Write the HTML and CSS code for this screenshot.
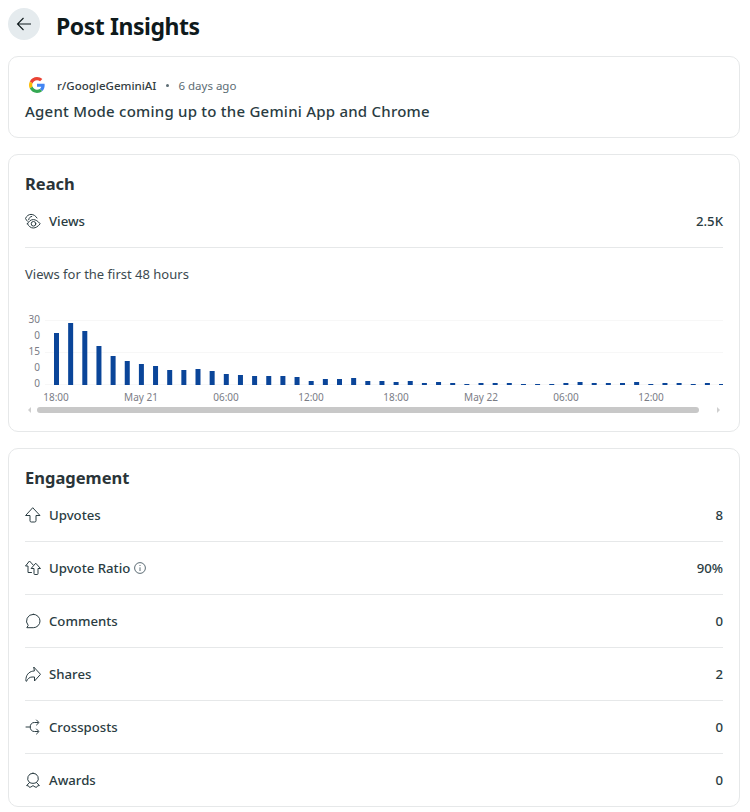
FILE: index.html
```html
<!DOCTYPE html>
<html lang="en">
<head>
<meta charset="utf-8">
<title>Post Insights</title>
<link rel="stylesheet" href="styles.css">
</head>
<body>
<header class="top">
  <button class="back" aria-label="Back">
    <svg class="back-icon" viewBox="0 0 16 16"><path d="M15 8H1.500M7.500 2 1.500 8l6 6"/></svg>
  </button>
  <h1 class="page-title">Post Insights</h1>
</header>

<section class="card post">
  <div class="meta">
    <span class="avatar">
      <svg viewBox="0 0 48 48" class="g-logo">
        <path fill="#EA4335" d="M24 9.5c3.54 0 6.71 1.22 9.21 3.6l6.85-6.85C35.9 2.38 30.47 0 24 0 14.62 0 6.51 5.38 2.56 13.22l7.98 6.19C12.43 13.72 17.74 9.5 24 9.5z"/>
        <path fill="#4285F4" d="M46.98 24.55c0-1.57-.15-3.09-.38-4.55H24v9.02h12.94c-.58 2.96-2.26 5.48-4.78 7.18l7.73 6c4.51-4.18 7.09-10.36 7.09-17.65z"/>
        <path fill="#FBBC05" d="M10.53 28.59c-.48-1.45-.76-2.99-.76-4.59s.27-3.14.76-4.59l-7.98-6.19C.92 16.46 0 20.12 0 24c0 3.88.92 7.54 2.56 10.78l7.97-6.19z"/>
        <path fill="#34A853" d="M24 48c6.48 0 11.93-2.13 15.89-5.81l-7.73-6c-2.15 1.45-4.92 2.3-8.16 2.3-6.26 0-11.57-4.22-13.47-9.91l-7.98 6.19C6.51 42.62 14.62 48 24 48z"/>
      </svg>
    </span>
    <span class="sub">r/GoogleGeminiAI</span>
    <span class="dot"></span>
    <span class="age">6 days ago</span>
  </div>
  <p class="post-title">Agent Mode coming up to the Gemini App and Chrome</p>
</section>

<section class="card">
  <h2 class="card-title">Reach</h2>
  <div class="row">
    <svg class="icon" viewBox="0 0 16 16">
      <path d="M12 5C10.600 2.800 8.500 1.400 6 1.400 3.600 1.400 1.700 2.900.5 5.400c.5 1.200 1.200 2.200 2.200 3"/>
      <path d="M3.700 6.700C4 4.800 5.100 3.700 6.800 3.400"/>
      <path d="M2.500 10.800c1.300-2.700 3.400-4.200 5.800-4.200s4.600 1.500 6.900 4.200c-2.300 2.700-4.500 4.200-6.900 4.200S3.800 13.500 2.500 10.800z"/>
      <circle cx="8.500" cy="10.800" r="2.300"/>
    </svg>
    <span class="label">Views</span>
    <span class="value">2.5K</span>
  </div>
  <p class="chart-note">Views for the first 48 hours</p>
  <svg class="chart" viewBox="0 0 698 120" role="img" aria-label="Views per hour">
    <g class="grid">
      <rect x="20" y="20" width="678" height="1"/>
      <rect x="20" y="52" width="678" height="1"/>
      <rect x="20" y="84" width="678" height="1"/>
    </g>
    <g class="y-axis">
      <text x="15" y="22.500">30</text>
      <text x="15" y="38.500">0</text>
      <text x="15" y="54.500">15</text>
      <text x="15" y="70.500">0</text>
      <text x="15" y="86.500">0</text>
    </g>
    <g class="bars">
      <rect x="29" y="33" width="5" height="52"/><rect x="43.150" y="23" width="5" height="62"/><rect x="57.300" y="31" width="5" height="54"/><rect x="71.450" y="46" width="5" height="39"/>
      <rect x="85.600" y="56" width="5" height="29"/><rect x="99.750" y="61" width="5" height="24"/><rect x="113.900" y="64" width="5" height="21"/><rect x="128.050" y="66" width="5" height="19"/>
      <rect x="142.200" y="70" width="5" height="15"/><rect x="156.350" y="70" width="5" height="15"/><rect x="170.500" y="69" width="5" height="16"/><rect x="184.650" y="71" width="5" height="14"/>
      <rect x="198.800" y="74" width="5" height="11"/><rect x="212.950" y="75" width="5" height="10"/><rect x="227.100" y="76" width="5" height="9"/><rect x="241.250" y="76" width="5" height="9"/>
      <rect x="255.400" y="76" width="5" height="9"/><rect x="269.550" y="77" width="5" height="8"/><rect x="283.700" y="81" width="5" height="4"/><rect x="297.850" y="79" width="5" height="6"/>
      <rect x="312" y="79" width="5" height="6"/><rect x="326.150" y="78" width="5" height="7"/><rect x="340.300" y="81" width="5" height="4"/><rect x="354.450" y="81" width="5" height="4"/>
      <rect x="368.600" y="82" width="5" height="3"/><rect x="382.750" y="81" width="5" height="4"/><rect x="396.900" y="83" width="5" height="2"/><rect x="411.050" y="82" width="5" height="3"/>
      <rect x="425.200" y="83" width="5" height="2"/><rect x="439.350" y="84" width="5" height="1"/><rect x="453.500" y="83" width="5" height="2"/><rect x="467.650" y="83" width="5" height="2"/>
      <rect x="481.800" y="83" width="5" height="2"/><rect x="495.950" y="84" width="5" height="1"/><rect x="510.100" y="84" width="5" height="1"/><rect x="524.250" y="84" width="5" height="1"/>
      <rect x="538.400" y="83" width="5" height="2"/><rect x="552.550" y="82" width="5" height="3"/><rect x="566.700" y="83" width="5" height="2"/><rect x="580.850" y="83" width="5" height="2"/>
      <rect x="595" y="83" width="5" height="2"/><rect x="609.150" y="82" width="5" height="3"/><rect x="623.300" y="84" width="5" height="1"/><rect x="637.450" y="83" width="5" height="2"/>
      <rect x="651.600" y="83" width="5" height="2"/><rect x="665.750" y="84" width="5" height="1"/><rect x="679.900" y="83" width="5" height="2"/><rect x="694.050" y="84" width="4" height="1"/>
    </g>
    <g class="x-axis">
      <text x="31" y="101">18:00</text>
      <text x="116" y="101">May 21</text>
      <text x="201" y="101">06:00</text>
      <text x="286" y="101">12:00</text>
      <text x="371" y="101">18:00</text>
      <text x="456" y="101">May 22</text>
      <text x="541" y="101">06:00</text>
      <text x="626" y="101">12:00</text>
    </g>
    <rect class="thumb" x="12" y="107" width="662" height="6" rx="3"/>
    <path class="arrow" d="M3 110l3-3v6z"/>
    <path class="arrow" d="M692 107l3 3-3 3z"/>
  </svg>
</section>

<section class="card">
  <h2 class="card-title">Engagement</h2>
  <div class="row">
    <svg class="icon" viewBox="0 0 16 16"><path d="M8 1l7 7.500h-4v5.200a1.300 1.300 0 0 1-1.300 1.300H6.300A1.300 1.300 0 0 1 5 13.700V8.500H1z"/></svg>
    <span class="label">Upvotes</span>
    <span class="value">8</span>
  </div>
  <div class="row">
    <svg class="icon" viewBox="0 0 16 16"><path d="M7.900 4.700 4.500 1 .5 6H3v6.500h3.500"/><path d="M11 3.500l4.500 5H13v5.200a.8.800 0 0 1-.8.800H9.800a.8.800 0 0 1-.8-.8V8.500H6.500z"/></svg>
    <span class="label">Upvote Ratio</span>
    <svg class="info" viewBox="0 0 12 12"><circle cx="6" cy="6" r="5.400"/><path d="M6 5.300V9"/><path d="M6 3v1"/></svg>
    <span class="value">90%</span>
  </div>
  <div class="row">
    <svg class="icon" viewBox="0 0 16 16"><path d="M8.300 1.300a6.700 6.700 0 1 1 0 13.400H1.800l1.400-2.300A6.700 6.700 0 0 1 8.300 1.300z"/></svg>
    <span class="label">Comments</span>
    <span class="value">0</span>
  </div>
  <div class="row">
    <svg class="icon" viewBox="0 0 16 16"><path d="M9 1.300l6.500 7-6 6.700v-4H7c-2.500 0-4.500 2-5.500 4.300-.9.200-.7-1.300-.5-2.800C1.500 8 5 5 9 5z"/></svg>
    <span class="label">Shares</span>
    <span class="value">2</span>
  </div>
  <div class="row">
    <svg class="icon" viewBox="0 0 16 16"><path d="M1 8h4M13 3.500H9.500A4 4 0 0 0 5.300 8a4 4 0 0 0 4.200 4.500H13M11.500 1l2.500 2.500L11.500 6M11.500 10l2.500 2.500-2.500 2.500"/></svg>
    <span class="label">Crossposts</span>
    <span class="value">0</span>
  </div>
  <div class="row">
    <svg class="icon" viewBox="0 0 16 16"><path d="M8 1.200a5.300 5.300 0 0 1 3.500 9.300l2.900 3.100-1.800.2-1 1.500-1.500-.3L8 13.600 5.900 15l-1.500.3-1-1.500-1.800-.2 2.900-3.100A5.300 5.300 0 0 1 8 1.200z"/><path d="M4.500 10.500c2.100 1.200 4.900 1.200 7 0"/></svg>
    <span class="label">Awards</span>
    <span class="value">0</span>
  </div>
</section>
</body>
</html>
```

FILE: styles.css
```css
* { box-sizing: border-box; }

html, body { background: #fff; }

body {
  margin: 0;
  padding: 8px 10px 0 8px;
  font-family: "Noto Sans", "Open Sans", sans-serif;
  color: #2a3c42;
}

.top {
  display: flex;
  align-items: center;
  gap: 16px;
  margin-bottom: 16px;
}

.back {
  width: 32px;
  height: 32px;
  padding: 0;
  border: 0;
  border-radius: 50%;
  background: #e5ebee;
  display: flex;
  align-items: center;
  justify-content: center;
}

.back-icon {
  width: 16px;
  height: 16px;
  fill: none;
  stroke: #0f1a1c;
  stroke-width: 1.100;
}

.page-title {
  margin: 0;
  padding-top: 4px;
  font-size: 23px;
  letter-spacing: -0.45px;
  line-height: 28px;
  font-weight: 700;
  color: #0f1a1c;
}

.card {
  border: 1px solid #e6e8e9;
  border-radius: 10px;
  padding: 16px 16px 0;
  margin-bottom: 16px;
}

.card:last-child { margin-bottom: 0; }

.post { height: 82px; }

.meta {
  display: flex;
  align-items: center;
  height: 24px;
  font-size: 11.500px;
}

.avatar {
  width: 24px;
  height: 24px;
  margin-right: 8px;
  display: flex;
  align-items: center;
  justify-content: center;
}

.g-logo { width: 16px; height: 16px; }

.sub { font-weight: 500; color: #333d42; }

.dot {
  width: 3px;
  height: 3px;
  margin: 0 9.500px;
  border-radius: 50%;
  background: #5c6c74;
}

.age { color: #5c6c74; }

.post-title {
  margin: 4px 0 0;
  font-size: 15px;
  letter-spacing: .23px;
  line-height: 20px;
  font-weight: 500;
  color: #2a3c42;
}

.card-title {
  margin: 0 0 -1px;
  padding-top: 1px;
  font-size: 16.500px;
  line-height: 24px;
  font-weight: 700;
  color: #2a3438;
}

.row {
  display: flex;
  align-items: center;
  gap: 8px;
  height: 53px;
  font-size: 13.200px;
  font-weight: 500;
  border-bottom: 1px solid #e6e8e9;
}

.row:last-child { height: 52px; border-bottom: 0; }

.icon {
  flex: none;
  width: 16px;
  height: 16px;
  fill: none;
  stroke: #2a3c42;
  stroke-width: 1;
  stroke-linejoin: round;
  stroke-linecap: round;
}

.info {
  width: 12px;
  height: 12px;
  margin-left: -4px;
  fill: none;
  stroke: #5c6c74;
  stroke-width: 1;
}

.value { margin-left: auto; }

.chart-note {
  margin: 0;
  padding-top: 17px;
  font-size: 13px;
  line-height: 18px;
  color: #3c4a50;
}

.chart {
  display: block;
  width: 698px;
  height: 120px;
  margin-top: 17px;
  margin-bottom: 11px;
}

.grid rect { fill: #f7f7f7; }
.bars rect { fill: #0a4599; }
.y-axis text { text-anchor: end; font-size: 10px; fill: #7a7c85; }
.x-axis text { text-anchor: middle; font-size: 10px; fill: #7a7c85; }
.thumb { fill: #c8c8c8; }
.arrow { fill: #cfcfcf; }
```
